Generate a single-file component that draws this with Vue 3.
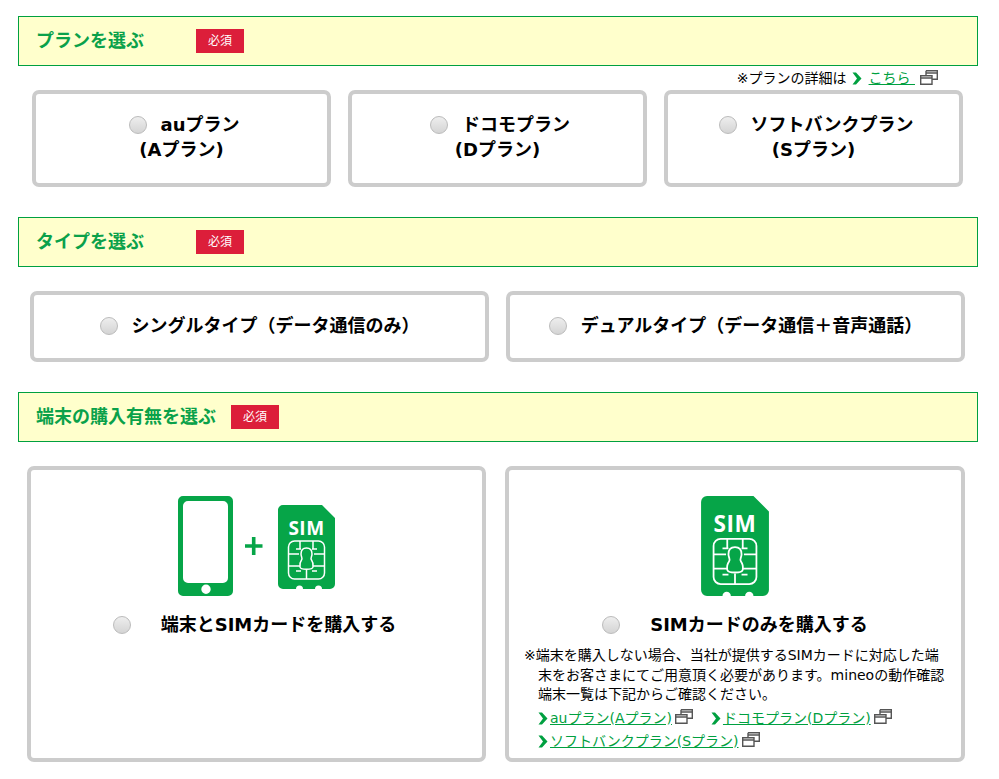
<script setup>
const planCards = [
  { name: 'auプラン', sub: '(Aプラン)' },
  { name: 'ドコモプラン', sub: '(Dプラン)' },
  { name: 'ソフトバンクプラン', sub: '(Sプラン)' },
]
const typeCards = ['シングルタイプ(データ通信のみ)'.replace('(', '（').replace(')', '）'), 'デュアルタイプ（データ通信＋音声通話）']
</script>

<template>
  <main class="page">
    <header class="bar first">
      <h2 class="bar-title">プランを選ぶ</h2>
      <span class="badge">必須</span>
    </header>
    <p class="plan-note">
      ※プランの詳細は
      <svg class="chev" viewBox="0 0 10 13"><path d="M0.5 0.5H4L9.5 6.5L4 12.5H0.5L5 6.5Z" /></svg>
      <a class="link plan-link" href="#">こちら&nbsp;</a>
      <svg class="win" viewBox="0 0 18 15"><path d="M6 0.7H17.3V9.3H12M6 0.7V5M6 3H17.3" /><path d="M0.7 5.7H12V14.3H0.7ZM0.7 8H12" /></svg>
    </p>
    <div class="row row-plan">
      <label v-for="c in planCards" :key="c.name" class="card card-plan">
        <span class="radio"></span>{{ c.name }}<br />{{ c.sub }}
      </label>
    </div>

    <header class="bar">
      <h2 class="bar-title">タイプを選ぶ</h2>
      <span class="badge">必須</span>
    </header>
    <div class="row row-type">
      <label v-for="t in typeCards" :key="t" class="card card-type">
        <span class="radio"></span>{{ t }}
      </label>
    </div>

    <header class="bar">
      <h2 class="bar-title">端末の購入有無を選ぶ</h2>
      <span class="badge">必須</span>
    </header>
    <div class="row row-buy">
      <div class="card card-buy">
        <svg class="art" width="158" height="100" viewBox="0 0 158 100">
          <path fill-rule="evenodd" class="fill" d="M5 0H50A5 5 0 0 1 55 5V95A5 5 0 0 1 50 100H5A5 5 0 0 1 0 95V5A5 5 0 0 1 5 0ZM10 5A5 5 0 0 0 5 10V82A5 5 0 0 0 10 87H45A5 5 0 0 0 50 82V10A5 5 0 0 0 45 5ZM28 88.500A4.700 4.700 0 1 0 28 97.900A4.700 4.700 0 1 0 28 88.500Z" />
          <path class="plus" d="M67 50H84.500M75.700 41V59" />
          <g transform="translate(100 9)">
            <path class="fill" d="M5 0H44L57 13V79A5 5 0 0 1 52 84H44A3.500 3.500 0 0 0 37 84H25A3.500 3.500 0 0 0 18 84H5A5 5 0 0 1 0 79V5A5 5 0 0 1 5 0Z" />
            <text x="28.500" y="30" class="sim-text">SIM</text>
            <g class="chip">
              <rect x="10.500" y="36" width="36" height="38" rx="6" />
              <path d="M22 36V44M35 36V44M10.500 49H21M36 49H46.500M10.500 61H22M35 61H46.500M28.500 65V74M18 44H23M34 44H39M18 66H23M34 66H39" />
              <path d="M28.500 43C24 43 23 46.500 23 49C23 52 25 53 23.500 55C22 57 21.500 59 22 62C22.500 65 34.500 65 35 62C35.500 59 35 57 33.500 55C32 53 34 52 34 49C34 46.500 33 43 28.500 43Z" />
            </g>
          </g>
        </svg>
        <p class="buy-label buy-label-left"><span class="radio radio-wide"></span>端末とSIMカードを購入する</p>
      </div>
      <div class="card card-buy card-buy-sim">
        <svg class="art" width="68" height="100" viewBox="0 0 57 84">
          <path class="fill" d="M5 0H44L57 13V79A5 5 0 0 1 52 84H44A3.500 3.500 0 0 0 37 84H25A3.500 3.500 0 0 0 18 84H5A5 5 0 0 1 0 79V5A5 5 0 0 1 5 0Z" />
          <text x="28.500" y="30" class="sim-text">SIM</text>
          <g class="chip">
            <rect x="10.500" y="36" width="36" height="38" rx="6" />
            <path d="M22 36V44M35 36V44M10.500 49H21M36 49H46.500M10.500 61H22M35 61H46.500M28.500 65V74M18 44H23M34 44H39M18 66H23M34 66H39" />
            <path d="M28.500 43C24 43 23 46.500 23 49C23 52 25 53 23.500 55C22 57 21.500 59 22 62C22.500 65 34.500 65 35 62C35.500 59 35 57 33.500 55C32 53 34 52 34 49C34 46.500 33 43 28.500 43Z" />
          </g>
        </svg>
        <p class="buy-label buy-label-right"><span class="radio radio-wide"></span>SIMカードのみを購入する</p>
        <p class="buy-note">※端末を購入しない場合、当社が提供するSIMカードに対応した端末をお客さまにてご用意頂く必要があります。mineoの動作確認端末一覧は下記からご確認ください。</p>
        <ul class="links">
          <li>
            <svg class="chev" viewBox="0 0 10 13"><path d="M0.5 0.5H4L9.500 6.500L4 12.500H0.500L5 6.500Z" /></svg>
            <a class="link" href="#">auプラン(Aプラン)</a>
            <svg class="win" viewBox="0 0 18 15"><path d="M6 0.7H17.3V9.3H12M6 0.7V5M6 3H17.3" /><path d="M0.7 5.7H12V14.3H0.7ZM0.7 8H12" /></svg>
          </li>
          <li>
            <svg class="chev" viewBox="0 0 10 13"><path d="M0.5 0.5H4L9.500 6.500L4 12.500H0.500L5 6.500Z" /></svg>
            <a class="link" href="#">ドコモプラン(Dプラン)</a>
            <svg class="win" viewBox="0 0 18 15"><path d="M6 0.7H17.3V9.3H12M6 0.7V5M6 3H17.3" /><path d="M0.7 5.7H12V14.3H0.7ZM0.7 8H12" /></svg>
          </li>
          <li>
            <svg class="chev" viewBox="0 0 10 13"><path d="M0.5 0.5H4L9.500 6.500L4 12.500H0.500L5 6.500Z" /></svg>
            <a class="link" href="#">ソフトバンクプラン(Sプラン)</a>
            <svg class="win" viewBox="0 0 18 15"><path d="M6 0.7H17.3V9.3H12M6 0.7V5M6 3H17.3" /><path d="M0.7 5.7H12V14.3H0.7ZM0.7 8H12" /></svg>
          </li>
        </ul>
      </div>
    </div>
  </main>
</template>

<style scoped>
.page {
  width: 960px;
  margin-left: 18px;
  padding-top: 16px;
  font-family: "DejaVu Sans", "Noto Sans CJK JP", sans-serif;
  color: #000;
}
.bar {
  display: flex;
  align-items: center;
  box-sizing: border-box;
  height: 50px;
  margin-top: 30px;
  padding-left: 17px;
  border: 1px solid #00a040;
  background: #ffc;
}
.bar.first { margin-top: 0; }
.bar-title {
  box-sizing: border-box;
  min-width: 160px;
  margin: 0;
  padding-right: 15px;
  font-size: 18px;
  line-height: 24px;
  font-weight: 700;
  color: #0aa14a;
}
.badge {
  width: 48px;
  height: 24px;
  line-height: 24px;
  text-align: center;
  font-size: 12px;
  color: #fff;
  background: #dc1e3a;
}
.plan-note {
  display: flex;
  align-items: center;
  justify-content: flex-end;
  height: 24px;
  margin: 0;
  padding-right: 40px;
  font-size: 14px;
  line-height: 24px;
  white-space: nowrap;
}
.plan-link { margin-left: 7px; }
.plan-note .chev { margin-left: 5px; }
.plan-note .win { margin-left: 5px; margin-bottom: 2px; }
.chev { width: 10px; height: 13px; flex: none; vertical-align: -2px; }
.chev path { fill: #00a040; }
.win { width: 18px; height: 15px; flex: none; vertical-align: -1px; }
.win path { fill: #fff; stroke: #555; stroke-width: 1.4; }
.link { color: #00a040; text-decoration: underline; }
.row { display: flex; }
.card {
  box-sizing: border-box;
  display: block;
  border: 4px solid #ccc;
  border-radius: 7px;
  background: #fff;
  font-size: 18px;
  line-height: 25px;
  font-weight: 700;
  text-align: center;
}
.radio {
  display: inline-block;
  box-sizing: border-box;
  width: 18px;
  height: 18px;
  margin-right: 14px;
  border: 1px solid #bbb;
  border-radius: 50%;
  background: linear-gradient(#eee, #d4d4d4);
  vertical-align: -3px;
}
.row-plan { gap: 17px; margin-left: 14px; }
.card-plan { width: 299px; height: 97px; padding-top: 18px; }
.card-plan .radio { margin-left: 5px; }
.row-type { gap: 17px; margin: 24px 0 0 12px; }
.card-type { width: 459px; height: 71px; padding-top: 18px; }
.row-buy { gap: 19px; margin: 24px 0 0 9px; }
.card-buy { width: 459px; height: 296px; padding-top: 26px; }
.card-buy-sim { width: 460px; }
.art { display: block; margin: 0 auto; }
.fill { fill: #06a548; }
.plus { fill: none; stroke: #06a548; stroke-width: 3.600; }
.sim-text {
  font-size: 19px;
  font-weight: 700;
  fill: #fff;
  text-anchor: middle;
  font-family: "Open Sans", sans-serif;
  letter-spacing: 0.5px;
}
.chip { fill: none; stroke: #fff; stroke-width: 1.500; }
.buy-label { margin: 16px 0 0; white-space: nowrap; }
.radio-wide { margin-right: 30px; }
.buy-label-left { padding-right: 4px; }
.buy-note {
  margin: 9px 0 0 15px;
  width: 408px;
  padding-left: 14px;
  text-indent: -14px;
  font-size: 14px;
  line-height: 19.500px;
  font-weight: 400;
  text-align: left;
}
.links {
  display: flex;
  flex-wrap: wrap;
  margin: 2px 0 0 29px;
  padding: 0;
  list-style: none;
  font-size: 14px;
  line-height: 23px;
  font-weight: 400;
  text-align: left;
}
.links li { margin-right: 18px; white-space: nowrap; }
.links .link { margin: 0 3px 0 2px; }
</style>
